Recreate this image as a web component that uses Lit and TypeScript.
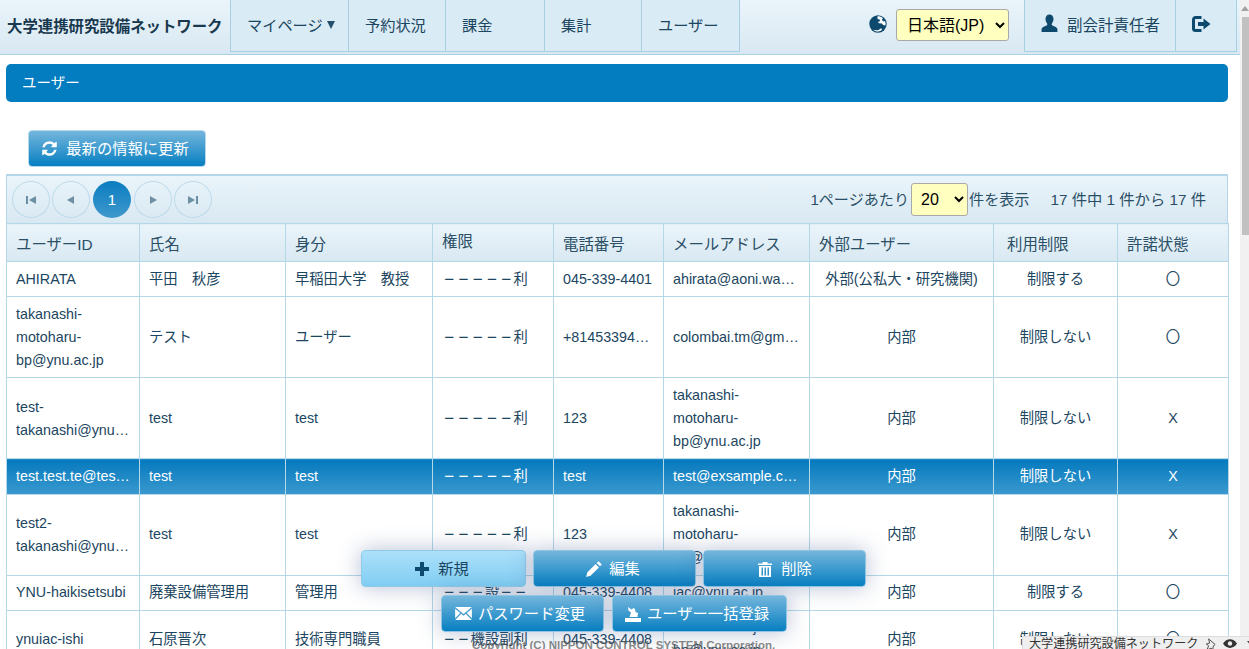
import { LitElement, html, css, svg } from "lit";
import { customElement } from "lit/decorators.js";

const refreshPath = "M1639 1056q0 5-1 7-64 268-268 434.5t-478 166.5q-146 0-282.5-55t-243.5-157l-129 129q-19 19-45 19t-45-19-19-45v-448q0-26 19-45t45-19h448q26 0 45 19t19 45-19 45l-137 137q71 66 161 102t187 36q134 0 250-65t186-179q11-17 53-117 8-23 30-23h192q13 0 22.5 9.5t9.5 22.5zm25-800v448q0 26-19 45t-45 19h-448q-26 0-45-19t-19-45 19-45l138-138q-148-137-349-137-134 0-250 65t-186 179q-11 17-53 117-8 23-30 23h-199q-13 0-22.5-9.5t-9.5-22.5v-7q65-268 270-434.5t480-166.5q146 0 284 55.5t245 156.5l130-129q19-19 45-19t45 19 19 45z";

const icons = {
  refresh: html`<svg class="ico" viewBox="0 0 1792 1792" width="17" height="17"><path fill="#fff" d=${refreshPath}/></svg>`,
  globe: html`<svg class="ico globe" viewBox="0 0 18 18" width="18" height="18"><circle cx="9" cy="9" r="8.700" fill="#0d4a6e"/>${svg`<path fill="#fff" d="M8.500 1.300c2.400 0 4 .6 5.400 2l-1 1.500 1.300 1.700 1.900-.5c.6 1.500.7 3 .3 4.500l-2.300-.6-1.200-1.300-3-.3L9 6.800l2-.6-.3-1.800L8.500 4zM4.200 14.800c1.800.5 3.700.5 5.400.1l2.400-1.600 1.200 1.300c-1.400 1.400-3 2-4.700 2-1.600 0-3.200-.6-4.300-1.800z"/>`}</svg>`,
  user: html`<svg class="ico" viewBox="0 0 18 18" width="19" height="19"><path fill="#0d4a6e" d="M9 .5c2.300 0 3.800 1.800 3.800 4.300 0 1.700-.7 3.300-1.500 4.200-.4.500-.3 1.500.4 1.900 1.900.9 4.800 1.700 4.800 3.600V17H1.500v-2.500c0-1.900 2.900-2.700 4.800-3.600.7-.4.8-1.400.4-1.900-.8-.9-1.500-2.500-1.500-4.200C5.200 2.300 6.700.5 9 .5z"/></svg>`,
  logout: html`<svg class="ico" viewBox="0 0 20 18" width="20" height="18"><path fill="none" stroke="#0d4a6e" stroke-width="3" d="M10.500 2.500H4.500A2 2 0 0 0 2.500 4.500v9a2 2 0 0 0 2 2h6"/><path fill="#0d4a6e" d="M7 7h5.500V3.500L19.500 9l-7 5.500V11H7z"/></svg>`,
  plus: html`<svg class="ico" viewBox="0 0 14 14" width="14" height="14"><path fill="#0d4a6e" d="M5 0h4v5h5v4H9v5H5V9H0V5h5z"/></svg>`,
  pencil: html`<svg class="ico" viewBox="0 0 18 18" width="18" height="18"><path fill="#fff" d="M13.500 1.200l3.300 3.300-1.800 1.800-3.300-3.300zM10.600 4.100l3.300 3.300-8.400 8.400-4.400 1.200 1.100-4.500z"/></svg>`,
  trash: html`<svg class="ico" viewBox="0 0 16 16" width="16" height="16"><path fill="#fff" d="M1 2.500h14V4H1zM5.500 1h5v1.500h-5zM2 5h12v11H2zm2.500 1.500V14.500H6V6.500zm3 0V14.500H9V6.500zm3 0V14.500H12V6.500z" fill-rule="evenodd"/></svg>`,
  mail: html`<svg class="ico" viewBox="0 0 18 14" width="17" height="13"><path fill="#fff" d="M0 0h18L9 7.500zM0 1.800l5.500 4.700L0 12zM18 1.800v10.200l-5.500-5.500zM6.500 7.400L9 9.500l2.500-2.100L18 14H0z"/></svg>`,
  imp: html`<svg class="ico" viewBox="0 0 16 16" width="16" height="16"><path fill="#fff" d="M0 12h16v4H0zM3 1l3.500 2.500L8.500 2 10 3l.5 3 2.500 1-.5 4H4.500L6 6.500 3.500 4.500z"/></svg>`,
  first: html`<svg viewBox="0 0 10 10" width="10" height="10"><path fill="#6d8fa3" d="M0 1h2v8H0zM10 1v8L3 5z"/></svg>`,
  prev: html`<svg viewBox="0 0 10 10" width="10" height="10"><path fill="#6d8fa3" d="M8 1v8L1 5z"/></svg>`,
  next: html`<svg viewBox="0 0 10 10" width="10" height="10"><path fill="#6d8fa3" d="M2 1v8l7-4z"/></svg>`,
  last: html`<svg viewBox="0 0 10 10" width="10" height="10"><path fill="#6d8fa3" d="M10 1H8v8h2zM0 1v8l7-4z"/></svg>`,
  pin: html`<svg viewBox="0 0 14 14" width="13" height="13"><path fill="none" stroke="#444" stroke-width="1" d="M5 1l7 6-2 1.500-.5 4L7.500 11 3 13l2-4.500L2.500 6.500l3.500-1z"/></svg>`,
  eye: html`<svg viewBox="0 0 16 12" width="14" height="11"><path fill="#333" d="M0 6c2-3.500 5-5 8-5s6 1.500 8 5c-2 3.500-5 5-8 5S2 9.500 0 6z"/><circle cx="8" cy="6" r="2.500" fill="#eee"/></svg>`,
};

type Row = { c: string[]; sel?: boolean };
const rows: Row[] = [
  { c: ["AHIRATA", "平田　秋彦", "早稲田大学　教授", "－－－－－利", "045-339-4401", "ahirata@aoni.waseda.jp", "外部(公私大・研究機関)", "制限する", "〇"] },
  { c: ["takanashi-motoharu-bp@ynu.ac.jp", "テスト", "ユーザー", "－－－－－利", "+81453394408", "colombai.tm@gmail.com", "内部", "制限しない", "〇"] },
  { c: ["test-takanashi@ynu.ac.jp", "test", "test", "－－－－－利", "123", "takanashi-motoharu-bp@ynu.ac.jp", "内部", "制限しない", "X"] },
  { c: ["test.test.te@test.com", "test", "test", "－－－－－利", "test", "test@exsample.com", "内部", "制限しない", "X"], sel: true },
  { c: ["test2-takanashi@ynu.ac.jp", "test", "test", "－－－－－利", "123", "takanashi-motoharu-bp@ynu.ac.jp", "内部", "制限しない", "X"] },
  { c: ["YNU-haikisetsubi", "廃棄設備管理用", "管理用", "－－－設－－", "045-339-4408", "iac@ynu.ac.jp", "内部", "制限する", "〇"] },
  { c: ["ynuiac-ishi", "石原晋次", "技術専門職員", "－－機設副利", "045-339-4408", "ishihara.shinji-bp@ynu.ac.jp", "内部", "制限しない", "〇"] },
];
const heads = ["ユーザーID", "氏名", "身分", "権限", "電話番号", "メールアドレス", "外部ユーザー", "利用制限", "許諾状態"];
const widths = [133, 146, 147, 121, 110, 146, 184, 124, 111];

const dashes = (v: string) =>
  v.split("").map((ch) => (ch === "－" ? html`<span class="d">−</span>` : ch));

@customElement("app-root")
export class AppRoot extends LitElement {
  static styles = css`
    :host {
      display: flex; height: 100vh; overflow: hidden; position: relative;
      font-family: "Liberation Sans", "Noto Sans CJK JP", sans-serif;
      font-size: 14.3px; color: #1b4560; background: #fff;
    }
    .main { width: 1240px; flex: none; overflow: hidden; }
    .scroll { flex: 1; background: #f1f1f1; position: relative; padding-left: 1px; }
    .scroll .arrow { height: 17px; display: flex; align-items: center; justify-content: center; }
    .scroll .arrow i { border: 4px solid transparent; border-bottom: 5px solid #a3a3a3; border-top: 0; }
    .scroll .thumb { height: 218px; background: #c1c1c1; margin-left: 1px; }

    header {
      height: 55px; box-sizing: border-box; display: flex; align-items: flex-start;
      border-bottom: 1px solid #a9d2e6;
      background: linear-gradient(#eaf4fa, #d8e8f2);
    }
    .brand { width: 230px; flex: none; height: 51px; display: flex; align-items: center; box-sizing: border-box; padding: 0 0 1px 7px; font-weight: bold; font-size: 15.4px; color: #17384e; white-space: nowrap; }
    nav { display: flex; border-left: 1px solid #a9cfe3; border-bottom: 1px solid #a9cfe3; background: #d9ebf4; height: 52px; box-sizing: border-box; }
    nav .it { box-sizing: border-box; border-right: 1px solid #a9cfe3; padding: 13px 0 0 16px; font-size: 15.2px; white-space: nowrap; color: #1b4560; display: flex; align-items: flex-start; }
    .caret { width: 0; height: 0; border: 4px solid transparent; border-top: 8px solid #24506c; border-bottom: 0; margin: 8px 0 0 4px; }
    .spacer { flex: 1; }
    .lang { display: flex; align-items: center; gap: 9px; height: 51px; margin-right: 15px; }
    .globe { margin-top: -4px; }
    select { background: #ffffc0; border: 1px solid #a9a9a9; border-radius: 3px; color: #000; font-family: inherit; font-size: 16px; }
    .lang select { width: 113px; height: 32px; margin-top: -1px; padding-left: 6px; }
    .user { display: flex; border-left: 1px solid #a9cfe3; border-bottom: 1px solid #a9cfe3; border-right: 1px solid #a9cfe3; background: #d9ebf4; height: 52px; box-sizing: border-box; margin-right: 3px; }
    .user .u { display: flex; align-items: center; gap: 8px; width: 151px; box-sizing: border-box; padding: 0 0 4px 15px; border-right: 1px solid #a9cfe3; font-size: 15.5px; white-space: nowrap; }
    .user .o { display: flex; align-items: center; width: 60px; box-sizing: border-box; padding: 0 0 4px 15px; }

    .title { margin: 9px 12px 0 6px; height: 38px; box-sizing: border-box; padding: 0 0 3px 16px; background: #037cc0; border-radius: 5px; color: #fff; display: flex; align-items: center; font-size: 14.5px; }

    .btn { box-sizing: border-box; height: 37px; border: 1px solid #b4d9ec; border-radius: 4px; display: flex; align-items: center; justify-content: center; gap: 6px; color: #fff; font-size: 15.3px; white-space: nowrap; background: linear-gradient(#74b6dc, #077fc1); }
    .btn span { padding-bottom: 4px; }
    .refresh { width: 178px; margin: 28px 0 7px 28px; gap: 8px; padding-right: 4px; }

    .tw { margin: 0 12px 0 6px; }
    .bar { height: 49px; box-sizing: border-box; display: flex; align-items: center; justify-content: space-between; border: 1px solid #b3d7e8; border-top-width: 2px; border-bottom: 0; background: linear-gradient(#eaf4fa, #d8e8f2); padding: 0 21px 0 5px; }
    .pager { display: flex; gap: 2px; }
    .pg { width: 38px; height: 37px; box-sizing: border-box; border-radius: 50%; border: 1px solid #bcdaea; display: flex; align-items: center; justify-content: center; }
    .pg.on { background: linear-gradient(#0a7dc0, #3f98cc); color: #fff; border: 0; font-size: 15px; margin: 0 1px; }
    .info { display: flex; align-items: center; font-size: 15.1px; white-space: nowrap; color: #2b4f66; }
    .info span { padding-bottom: 4px; }
    .info select { width: 57px; height: 33px; padding-left: 5px; margin: 0 1px 0 2px; }
    .info .tot { margin-left: 21px; font-size: 15.3px; }

    table { border-collapse: collapse; table-layout: fixed; width: 1222px; }
    th, td { border: 1px solid #b5d8e8; overflow: hidden; text-overflow: ellipsis; }
    th { height: 38px; box-sizing: border-box; padding: 0 9px; text-align: left; font-weight: normal; font-size: 15.4px; background: linear-gradient(#eaf4fa, #d8e8f2); color: #2b4f66; }
    th.raised { padding-bottom: 5px; }
    th.inset { padding-left: 13px; }
    td { padding: 6px 9px 5px; line-height: 23px; vertical-align: middle; }
    td.ctr { text-align: center; }
    .d { display: inline-block; width: 14.3px; text-align: center; font-size: 17px; line-height: 1; vertical-align: -1px; }
    tr.sel td { background: linear-gradient(#0579bd, #3a99cf); color: #fff; padding-bottom: 6px; }
    tr.sel ~ tr td { padding: 5px 9px 6px; }

    .float { position: absolute; left: 0; width: 1227px; bottom: 17px; display: flex; flex-direction: column; gap: 8px; align-items: center; z-index: 2; }
    .frow { display: flex; gap: 7px; }
    .frow.two { gap: 8px; }
    .float .btn { box-shadow: 0 0 22px rgba(60, 85, 140, 0.38); border-color: #8fc4e2; padding-right: 4px; }
    .float .w { width: 163px; }
    .float .btn.del { gap: 8px; padding-right: 0; }
    .float .btn.n { width: 165px; color: #1b4560; background: linear-gradient(#acE0fa, #80cdf2); border-color: #8fcbe8; gap: 9px; padding-right: 3px; }
    .float .w2 { width: 175px; }
    .copy { position: absolute; left: 472px; bottom: -2px; font-size: 11.5px; font-weight: bold; color: rgba(95, 95, 95, 0.75); white-space: nowrap; z-index: 3; }
    .tab { position: absolute; right: 0; bottom: 0; width: 227px; height: 13px; box-sizing: border-box; background: #efefef; border-top: 1px solid #ddd; border-left: 1px solid #ddd; padding-left: 6px; display: flex; align-items: flex-start; font-size: 12.1px; line-height: 14px; color: #333; z-index: 4; white-space: nowrap; overflow: hidden; }
    .tab svg { margin: 1px 0 0 6px; flex: none; }
    .tab i { width: 0; height: 0; border: 4px solid transparent; border-top: 5px solid #444; margin: 4px 0 0 10px; }
    .ico { flex: none; display: block; }
  `;

  render() {
    const navs: [string, number][] = [["マイページ", 118], ["予約状況", 97], ["課金", 99], ["集計", 97], ["ユーザー", 98]];
    return html`
      <div class="main">
        <header>
          <div class="brand">大学連携研究設備ネットワーク</div>
          <nav>
            ${navs.map(([t, w], i) => html`<div class="it" style="width:${w}px">${t}${i === 0 ? html`<i class="caret"></i>` : ""}</div>`)}
          </nav>
          <div class="spacer"></div>
          <div class="lang">${icons.globe}<select><option>日本語(JP)</option></select></div>
          <div class="user">
            <div class="u">${icons.user}<span>副会計責任者</span></div>
            <div class="o">${icons.logout}</div>
          </div>
        </header>
        <div class="title">ユーザー</div>
        <div class="btn refresh">${icons.refresh}<span>最新の情報に更新</span></div>
        <div class="tw">
          <div class="bar">
            <div class="pager">
              <div class="pg">${icons.first}</div>
              <div class="pg">${icons.prev}</div>
              <div class="pg on">1</div>
              <div class="pg">${icons.next}</div>
              <div class="pg">${icons.last}</div>
            </div>
            <div class="info">
              <span>1ページあたり</span><select><option>20</option></select><span>件を表示</span>
              <span class="tot">17 件中 1 件から 17 件</span>
            </div>
          </div>
          <table>
            <colgroup>${widths.map((w) => html`<col style="width:${w}px" />`)}</colgroup>
            <thead><tr>${heads.map((h, i) => html`<th class=${i === 3 ? "raised" : i === 7 ? "inset" : ""}>${h}</th>`)}</tr></thead>
            <tbody>
              ${rows.map((r) => html`<tr class=${r.sel ? "sel" : ""}>${r.c.map((v, i) => html`<td class=${i >= 6 ? "ctr" : ""}>${i === 3 ? dashes(v) : v}</td>`)}</tr>`)}
            </tbody>
          </table>
        </div>
      </div>
      <div class="scroll"><div class="arrow"><i></i></div><div class="thumb"></div></div>
      <div class="float">
        <div class="frow">
          <div class="btn n">${icons.plus}<span>新規</span></div>
          <div class="btn w">${icons.pencil}<span>編集</span></div>
          <div class="btn w del">${icons.trash}<span>削除</span></div>
        </div>
        <div class="frow two">
          <div class="btn w">${icons.mail}<span>パスワード変更</span></div>
          <div class="btn w2">${icons.imp}<span>ユーザー一括登録</span></div>
        </div>
      </div>
      <div class="copy">Copyright (C) NIPPON CONTROL SYSTEM Corporation.</div>
      <div class="tab"><span>大学連携研究設備ネットワーク</span>${icons.pin}${icons.eye}<i></i></div>
    `;
  }
}
